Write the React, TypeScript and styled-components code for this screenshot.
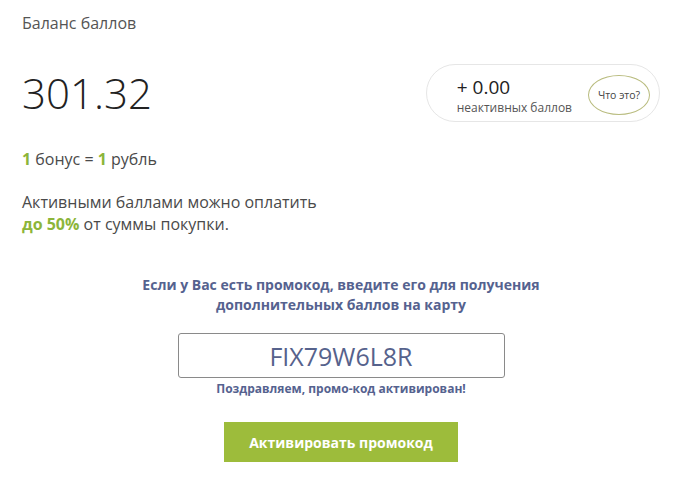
import React from 'react';
import styled, { createGlobalStyle } from 'styled-components';

const Global = createGlobalStyle`
  html, body { margin: 0; padding: 0; background: #fff; }
  body { font-family: "Open Sans", "Liberation Sans", sans-serif; color: #4a4a4a; }
  * { box-sizing: border-box; }
`;

const Page = styled.div`
  padding: 12px 21px 0 22px;
`;

const Title = styled.div`
  font-size: 16px;
  line-height: 22px;
  color: #555;
`;

const BalanceRow = styled.div`
  display: flex;
  align-items: center;
  justify-content: space-between;
  margin-top: 30px;
`;

const Amount = styled.div`
  font-size: 42px;
  font-weight: 300;
  line-height: 42px;
  color: #222;
`;

const Pill = styled.div`
  display: flex;
  align-items: center;
  gap: 16px;
  height: 58px;
  padding: 0 9px 0 30px;
  border: 1px solid #e6e6e6;
  border-radius: 29px;
`;

const PillText = styled.div`
  display: flex;
  flex-direction: column;
  margin-top: 6px;
`;

const Inactive = styled.div`
  font-size: 19px;
  line-height: 22px;
  color: #222;
`;

const InactiveLabel = styled.div`
  margin-top: 2px;
  font-size: 12px;
  line-height: 16px;
  color: #555;
`;

const WhatBtn = styled.button`
  width: 62px;
  height: 40px;
  margin-top: 4px;
  padding: 0;
  border: 1px solid #b9bc7f;
  border-radius: 50%;
  background: #fff;
  font-family: inherit;
  font-size: 10.5px;
  color: #444;
  cursor: pointer;
`;

const Line = styled.p<{ top: number }>`
  margin: ${p => p.top}px 0 0;
  font-size: 16px;
  line-height: 22.7px;
  color: #4a4a4a;
`;

const Green = styled.b`
  font-weight: 700;
  color: #8cb53a;
`;

const Promo = styled.div`
  display: flex;
  flex-direction: column;
  align-items: center;
  margin-top: 39px;
`;

const PromoTitle = styled.div`
  font-size: 14px;
  line-height: 20px;
  font-weight: 700;
  color: #55628f;
  text-align: center;
`;

const CodeInput = styled.input`
  width: 327px;
  height: 45px;
  margin-top: 18px;
  border: 1px solid #8a8a8a;
  border-radius: 3px;
  background: #fff;
  font-family: inherit;
  font-size: 25px;
  font-weight: 400;
  color: #56628c;
  text-align: center;
  outline: none;
`;

const Success = styled.div`
  margin-top: 3px;
  font-size: 12px;
  line-height: 16px;
  font-weight: 700;
  color: #55628f;
`;

const ActivateBtn = styled.button`
  width: 234px;
  height: 40px;
  margin-top: 25px;
  border: none;
  background: #9dbc3b;
  color: #fff;
  font-family: inherit;
  font-size: 14px;
  font-weight: 700;
  cursor: pointer;
`;

export default function App() {
  const [code, setCode] = React.useState('FIX79W6L8R');
  return (
    <>
      <Global />
      <Page>
        <Title>Баланс баллов</Title>
        <BalanceRow>
          <Amount>301.32</Amount>
          <Pill>
            <PillText>
              <Inactive>+ 0.00</Inactive>
              <InactiveLabel>неактивных баллов</InactiveLabel>
            </PillText>
            <WhatBtn>Что это?</WhatBtn>
          </Pill>
        </BalanceRow>
        <Line top={26}>
          <Green>1</Green> бонус = <Green>1</Green> рубль
        </Line>
        <Line top={20}>
          Активными баллами можно оплатить
          <br />
          <Green>до 50%</Green> от суммы покупки.
        </Line>
        <Promo>
          <PromoTitle>
            Если у Вас есть промокод, введите его для получения
            <br />
            дополнительных баллов на карту
          </PromoTitle>
          <CodeInput value={code} onChange={e => setCode(e.target.value)} />
          <Success>Поздравляем, промо-код активирован!</Success>
          <ActivateBtn>Активировать промокод</ActivateBtn>
        </Promo>
      </Page>
    </>
  );
}
